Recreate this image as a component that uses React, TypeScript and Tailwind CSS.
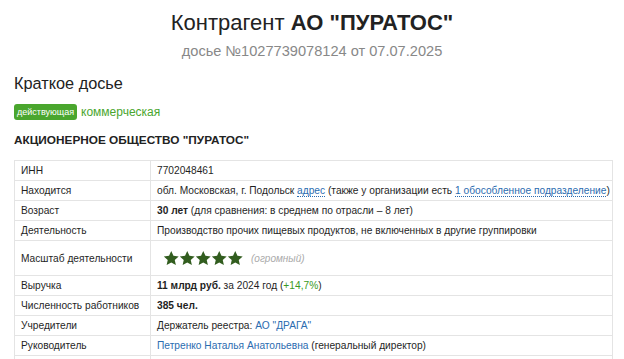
import React from "react";

const FONT = { fontFamily: '"Liberation Sans", Arial, sans-serif' };

const Star: React.FC = () => (
    <svg viewBox="0 0 24 24" className="w-[16.5px] h-[16.5px] -mr-[0.5px]">
        <path
            d="M12 1.5l3.2 7 7.6.8-5.7 5.1 1.6 7.5L12 18l-6.7 3.9 1.6-7.5L1.2 9.3l7.6-.8z"
            fill="#325d1f"
        />
    </svg>
);

const DotLink: React.FC<{ children: React.ReactNode }> = ({ children }) => (
    <span className="text-[#2b6cb0] border-b border-dotted border-[#2b6cb0]">{children}</span>
);

const rows: { label: string; value: React.ReactNode; tall?: boolean }[] = [
    { label: "ИНН", value: "7702048461" },
    {
        label: "Находится",
        value: (
            <>
                обл. Московская, г. Подольск <DotLink>адрес</DotLink> (также у организации есть{" "}
                <DotLink>1 обособленное подразделение</DotLink>)
            </>
        ),
    },
    {
        label: "Возраст",
        value: (
            <>
                <b>30 лет</b> (для сравнения: в среднем по отрасли – 8 лет)
            </>
        ),
    },
    { label: "Деятельность", value: "Производство прочих пищевых продуктов, не включенных в другие группировки" },
    {
        label: "Масштаб деятельности",
        tall: true,
        value: (
            <div className="flex items-center">
                <div className="flex ml-[6px]">
                    <Star /><Star /><Star /><Star /><Star />
                </div>
                <span className="ml-[8px] italic text-[#aaa] text-[10px]">(огромный)</span>
            </div>
        ),
    },
    {
        label: "Выручка",
        value: (
            <>
                <b>11 млрд руб.</b> за 2024 год (<span className="text-[#3c9a23]">+14,7%</span>)
            </>
        ),
    },
    { label: "Численность работников", value: <b>385 чел.</b> },
    {
        label: "Учредители",
        value: (
            <>
                Держатель реестра: <span className="text-[#2b6cb0]">АО "ДРАГА"</span>
            </>
        ),
    },
    {
        label: "Руководитель",
        value: (
            <>
                <span className="text-[#2b6cb0]">Петренко Наталья Анатольевна</span> (генеральный директор)
            </>
        ),
    },
    { label: "", value: "" },
];

export default function App() {
    return (
        <div className="w-[624px] h-[359px] overflow-hidden bg-white text-[#222]" style={FONT}>
            <div className="flex flex-col items-center pt-[9px]">
                <h1 className="text-[22px] leading-[28px] text-[#222]">
                    Контрагент <b>АО "ПУРАТОС"</b>
                </h1>
                <div className="text-[14.6px] leading-[18px] text-[#888] mt-[5px]">
                    досье №1027739078124 от 07.07.2025
                </div>
            </div>
            <div className="px-[14px]">
                <h2 className="text-[16.3px] leading-[20px] mt-[13px]">Краткое досье</h2>
                <div className="flex items-center mt-[10px] gap-[4px]">
                    <span className="bg-[#4aa62e] text-white text-[9px] leading-[16px] px-[3px] rounded-[3px]">
                        действующая
                    </span>
                    <span className="text-[#4aa62e] text-[12px]">коммерческая</span>
                </div>
                <div className="font-bold text-[11.8px] leading-[16px] mt-[11px]">
                    АКЦИОНЕРНОЕ ОБЩЕСТВО "ПУРАТОС"
                </div>
                <table className="mt-[12px] w-[599px] table-fixed border-collapse text-[10.2px] leading-[13px] text-[#1f1f1f]">
                    <colgroup>
                        <col className="w-[136px]" />
                        <col />
                    </colgroup>
                    <tbody>
                        {rows.map((r, i) => (
                            <tr key={i} className={r.tall ? "h-[35px]" : "h-[20px]"}>
                                <td className="border border-[#e4e4e4] px-[6px] py-0 whitespace-nowrap">
                                    {r.label}
                                </td>
                                <td className="border border-[#e4e4e4] px-[6px] py-0 whitespace-nowrap">{r.value}</td>
                            </tr>
                        ))}
                    </tbody>
                </table>
            </div>
        </div>
    );
}
